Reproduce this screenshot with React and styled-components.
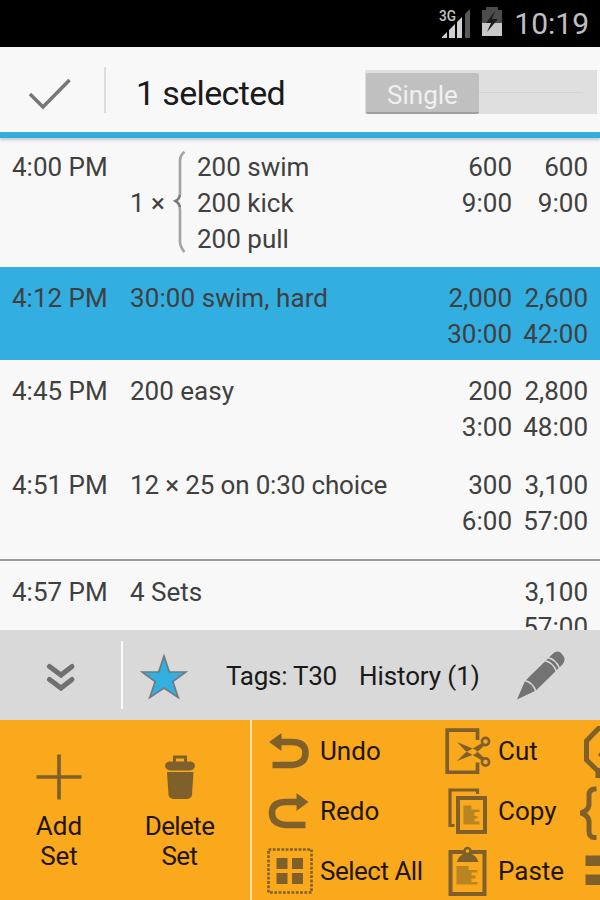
import React from "react";
import styled, { createGlobalStyle } from "styled-components";

const sets = [
  {
    time: "4:00 PM",
    repeat: "1 ×",
    lines: ["200 swim", "200 kick", "200 pull"],
    distance: ["600", "9:00"],
    total: ["600", "9:00"],
  },
  {
    time: "4:12 PM",
    lines: ["30:00 swim, hard"],
    distance: ["2,000", "30:00"],
    total: ["2,600", "42:00"],
    tracking: "0.1px",
    selected: true,
  },
  {
    time: "4:45 PM",
    lines: ["200 easy"],
    distance: ["200", "3:00"],
    total: ["2,800", "48:00"],
  },
  {
    time: "4:51 PM",
    lines: ["12 × 25 on 0:30 choice"],
    distance: ["300", "6:00"],
    total: ["3,100", "57:00"],
    tracking: "-0.15px",
  },
];

const summary = {
  time: "4:57 PM",
  lines: ["4 Sets"],
  distance: [],
  total: ["3,100", "57:00"],
};

const StatusIcons = () => (
  <svg width="90" height="47" viewBox="0 0 90 47">
    <text x="20" y="21" fontSize="15.5" fontWeight="500" fill="#c4c4c4" textLength="17" lengthAdjust="spacingAndGlyphs">
      3G
    </text>
    <path d="M23 38v-1l5-5v6zM30 38v-8l6-6v14zM38 38V22l5-5v21z" fill="#d0d0d0" />
    <path d="M46 38V14l5-5v29z" fill="#585858" />
    <path d="M63 10h4V7h12v3h4v13H63z" fill="#4c4c4c" />
    <path d="M63 23h20v13H63z" fill="#c8c8c8" />
    <path d="M76 11l-9 12h5l-4 9 11-13h-6z" fill="#1c1c1c" />
  </svg>
);

const CheckIcon = () => (
  <svg width="104" height="85" viewBox="0 0 104 85">
    <path d="M30 47l13 13L69.5 33" fill="none" stroke="#777" strokeWidth="3.6" />
  </svg>
);

const BraceIcon = () => (
  <svg width="14" height="104" viewBox="0 0 14 104">
    <path
      d="M12.5 1Q8 4 8 10V42Q8 48 3.5 50Q8 53 8 59V90Q8 96 12.5 101"
      fill="none"
      stroke="#a5a5a5"
      strokeWidth="2.7"
    />
    <path d="M8 44Q7.5 48 3.5 50Q7.5 52 8 56" fill="none" stroke="#777" strokeWidth="2" />
  </svg>
);

const ChevronsIcon = () => (
  <svg width="121" height="90" viewBox="0 0 121 90">
    <path d="M49.5 36.5l11.5 8.5L72 36.5M49.5 49.5l11.5 8.5L72 49.5" fill="none" stroke="#707070" strokeWidth="5" strokeLinecap="round" />
  </svg>
);

const StarIcon = () => (
  <svg width="48" height="46" viewBox="0 0 48 46">
    <path
      d="M24 2l5.3 16H46L32.8 27.5 38.2 43.5 24 34 9.8 43.5 15.2 27.5 2 18H18.7z"
      fill="#33b0e0"
      stroke="#707880"
      strokeWidth="1.7"
    />
  </svg>
);

const PencilIcon = () => (
  <svg width="50" height="50" viewBox="0 0 50 50">
    <path d="M1 49.5L9 31 36 4.5Q40.5-.5 45 3L48 7Q49.5 11 46.5 14.5L20 40.5z" fill="#737373" />
    <path d="M8.5 30.5Q16.5 32 20 41.5M28 10.5Q37 12 40.5 21.5M31 7.5Q40 9 43.5 18.5" fill="none" stroke="#d9d9d9" strokeWidth="1.7" />
  </svg>
);

const PlusIcon = () => (
  <svg width="46" height="46" viewBox="0 0 46 46">
    <path d="M23 .5v45M.5 23h45" stroke="#80602a" strokeWidth="3.7" />
  </svg>
);

const TrashIcon = () => (
  <svg width="32" height="46" viewBox="0 0 32 46">
    <path d="M10.5 9V3h11v6" fill="none" stroke="#80602a" strokeWidth="3" />
    <path d="M5 7.5h22q4 1 4 4.5-1 4-5 4.5H6q-4-.5-5-4.5 0-3.5 4-4.5z" fill="#80602a" />
    <path d="M3 18h26.5L28 41q-.5 3.5-5 4H9.5q-4.5-.5-5-4z" fill="#80602a" />
  </svg>
);

const UndoIcon = () => (
  <svg width="46" height="46" viewBox="0 0 46 46">
    <path d="M14 14H25Q38.5 14 38.5 25T25 37H5.5" fill="none" stroke="#80602a" strokeWidth="6.5" />
    <path d="M2 14L14.5 5v18z" fill="#80602a" />
  </svg>
);

const RedoIcon = () => (
  <svg width="46" height="46" viewBox="0 0 46 46">
    <path d="M30 14H19Q5 14 5 25T19 37H38.5" fill="none" stroke="#80602a" strokeWidth="6.5" />
    <path d="M41.5 14L29.5 5v18z" fill="#80602a" />
  </svg>
);

const SelectAllIcon = () => (
  <svg width="46" height="46" viewBox="0 0 46 46">
    <rect x="1.5" y="1.5" width="43" height="43" fill="none" stroke="#80602a" strokeWidth="2.6" strokeDasharray="2.8 1.5" />
    <path d="M9.5 10h11v11h-11zM25 10h11v11H25zM9.5 25h11v11h-11zM25 25h11v11H25z" fill="#80602a" />
  </svg>
);

const CutIcon = () => (
  <svg width="46" height="46" viewBox="0 0 46 46">
    <path d="M32.5 12V2.2H2.2V44.3H32.5V34.5" fill="none" stroke="#80602a" strokeWidth="3.7" />
    <path d="M12 14L30 21.5 39.5 30 37 32.5 20 22.5zM12 33L30 26 39.5 17.5 37 15 20 25z" fill="#80602a" />
    <circle cx="40.5" cy="13.5" r="3.6" fill="none" stroke="#80602a" strokeWidth="2.6" />
    <circle cx="40.5" cy="34" r="3.6" fill="none" stroke="#80602a" strokeWidth="2.6" />
  </svg>
);

const CopyIcon = () => (
  <svg width="46" height="46" viewBox="0 0 46 46">
    <path d="M32.5 6V2H5V37.500H9.500" fill="none" stroke="#80602a" strokeWidth="3.200" />
    <rect x="13" y="10" width="27" height="34" fill="none" stroke="#80602a" strokeWidth="4" />
    <path d="M18.500 17.500h8v4h8v2.500h-5v4h3v2.500h-3v3h5v3h-16z" fill="#b98522" />
  </svg>
);

const PasteIcon = () => (
  <svg width="46" height="50" viewBox="0 0 46 50">
    <rect x="5.500" y="6" width="34" height="42" fill="none" stroke="#80602a" strokeWidth="4" />
    <path d="M12 16q1-6 8-9h5q7 3 8.500 9z" fill="#80602a" />
    <circle cx="22.500" cy="5" r="3" fill="#f9a91b" stroke="#80602a" strokeWidth="2.500" />
    <path d="M11.500 20h12v4h9v2.500h-6v3h4v3h-4v3.500h6v2.500h-21z" fill="#b98522" />
  </svg>
);

const OverflowIcons = () => (
  <svg width="20" height="180" viewBox="-3 0 20 180">
    <path d="M19 8.500H15.500L3.500 21V40L14.500 50.500H20" fill="none" stroke="#80602a" strokeWidth="5" />
    <path d="M18 31l-3 4 3 3zM12.500 51h5v7h-5z" fill="#80602a" />
    <path d="M13.500 69H11Q6 70 6 75V85Q5 91-2 93Q5 95 6 101V111Q6 117 11 117.500H13.500" fill="none" stroke="#80602a" strokeWidth="5" />
    <path d="M2.500 135.500H18v10.500H2.500zM2.500 154.500H18v10.500H2.500z" fill="#80602a" />
  </svg>
);

const SetItem = ({ time, repeat, lines, distance, total, selected, tracking }) => (
  <SetRow $selected={selected}>
    <Time>{time}</Time>
    <Description $tracking={tracking}>
      {repeat && (
        <Repeat>
          <span>{repeat}</span>
          <BraceIcon />
        </Repeat>
      )}
      <div>
        {lines.map((line) => (
          <Line key={line}>{line}</Line>
        ))}
      </div>
    </Description>
    <Figures $width="75px">
      {distance.map((value) => (
        <Line key={value}>{value}</Line>
      ))}
    </Figures>
    <Figures $width="76px">
      {total.map((value) => (
        <Line key={value}>{value}</Line>
      ))}
    </Figures>
  </SetRow>
);

const App = () => {
  return (
    <Screen>
      <GlobalStyle />
      <StatusBar>
        <StatusIcons />
        <Clock>10:19</Clock>
      </StatusBar>

      <ActionBar>
        <CheckIcon />
        <Divider $height="46px" $color="#dcdcdc" />
        <Title>1 selected</Title>
        <Switch>
          <Thumb>Single</Thumb>
          <Groove />
        </Switch>
      </ActionBar>

      <SetList>
        {sets.map((set) => (
          <SetItem key={set.time} {...set} />
        ))}
        <Total>
          <SetItem {...summary} />
        </Total>
      </SetList>

      <TagBar>
        <ChevronsIcon />
        <Divider $height="68px" $color="#fafafa" />
        <StarSlot>
          <StarIcon />
        </StarSlot>
        <Tags>Tags: T30</Tags>
        <History>History (1)</History>
        <PencilIcon />
      </TagBar>

      <Commands>
        <BigButton $width="118px">
          <PlusIcon />
          <BigLabel>
            Add
            <br />
            Set
          </BigLabel>
        </BigButton>
        <BigButton $width="123px">
          <TrashIcon />
          <BigLabel $tracking="-0.6px">
            Delete
            <br />
            Set
          </BigLabel>
        </BigButton>
        <CommandGrid>
          <Command>
            <UndoIcon />
            Undo
          </Command>
          <Command>
            <RedoIcon />
            Redo
          </Command>
          <Command $tracking="-0.5px">
            <SelectAllIcon />
            Select All
          </Command>
          <Command>
            <CutIcon />
            Cut
          </Command>
          <Command>
            <CopyIcon />
            Copy
          </Command>
          <Command>
            <PasteIcon />
            Paste
          </Command>
        </CommandGrid>
        <OverflowIcons />
      </Commands>
    </Screen>
  );
};

export default App;

const GlobalStyle = createGlobalStyle`
  body {
    margin: 0;
    font-family: Roboto, "Liberation Sans", sans-serif;
  }
  svg {
    display: block;
    flex-shrink: 0;
  }
`;

const Screen = styled.div`
  display: flex;
  flex-direction: column;
  width: 600px;
  height: 900px;
  overflow: hidden;
  background: #f8f8f8;
`;

const StatusBar = styled.div`
  display: flex;
  align-items: center;
  justify-content: flex-end;
  height: 47px;
  flex-shrink: 0;
  padding-right: 11px;
  background: #000;
`;

const Clock = styled.span`
  margin-left: 5px;
  font-size: 30px;
  line-height: 47px;
  color: #c0c0c0;
`;

const ActionBar = styled.header`
  display: flex;
  align-items: center;
  height: 85px;
  flex-shrink: 0;
  border-bottom: 6px solid #33aedc;
  box-shadow: 0 2px 3px rgba(0, 0, 0, 0.2);
  z-index: 1;
`;

const Divider = styled.div`
  width: 2px;
  height: ${(props) => props.$height};
  flex-shrink: 0;
  background: ${(props) => props.$color};
`;

const Title = styled.h1`
  flex: 1;
  margin: 7px 0 0 30px;
  font-size: 34px;
  font-weight: 400;
  line-height: 40px;
  letter-spacing: -0.65px;
  color: #1a1a1a;
`;

const Switch = styled.div`
  display: flex;
  align-items: center;
  width: 232px;
  height: 44px;
  margin: 5px 3px 0 0;
  background: #dfdfdf;
`;

const Thumb = styled.div`
  width: 113px;
  height: 39px;
  margin: 2px 0 0 1px;
  border-bottom: 2px solid #9f9f9f;
  border-radius: 2px;
  background: #c0c0c0;
  color: #f0f0f0;
  font-size: 26px;
  line-height: 45px;
  text-align: center;
`;

const Groove = styled.div`
  width: 104px;
  height: 1px;
  background: #d2d2d2;
`;

const SetList = styled.main`
  flex: 1;
  min-height: 0;
  overflow: hidden;
`;

const SetRow = styled.div`
  display: flex;
  padding: 12px 12px 10px;
  background: ${(props) => (props.$selected ? "#32aee0" : "transparent")};
  color: #404040;
  font-size: 26px;

  &:first-child {
    padding-top: 10px;
    padding-bottom: 11.5px;
  }
`;

const Line = styled.div`
  height: 35.8px;
  line-height: 38px;
  white-space: nowrap;
`;

const Time = styled(Line)`
  width: 118px;
`;

const Description = styled.div`
  display: flex;
  flex: 1;
  letter-spacing: ${(props) => props.$tracking || "normal"};
`;

const Repeat = styled.div`
  display: flex;
  align-items: center;
  justify-content: space-between;
  width: 56px;
  margin-right: 11px;
  padding-top: 2px;
`;

const Figures = styled.div`
  width: ${(props) => props.$width};
  text-align: right;
`;

const Total = styled.div`
  margin-top: 11px;
  border-top: 2px solid #9b9b9b;

  ${SetRow} {
    padding-top: 12px;
  }
`;

const TagBar = styled.div`
  display: flex;
  align-items: center;
  height: 90px;
  flex-shrink: 0;
  background: #d9d9d9;
  color: #1a1a1a;
  font-size: 26px;
`;

const StarSlot = styled.div`
  margin: 4px 38px 0 17px;
`;

const Tags = styled.span`
  width: 133px;
  line-height: 32px;
  padding-top: 2px;
  letter-spacing: -0.25px;
  white-space: nowrap;
`;

const History = styled(Tags)`
  width: 157px;
  letter-spacing: -0.1px;
`;

const Commands = styled.footer`
  display: flex;
  height: 180px;
  flex-shrink: 0;
  overflow: hidden;
  background: #f9a91b;
  color: #1f1606;
`;

const BigButton = styled.div`
  display: flex;
  flex-direction: column;
  align-items: center;
  width: ${(props) => props.$width};
  flex-shrink: 0;
  padding-top: 34px;
`;

const BigLabel = styled.div`
  margin-top: 11px;
  font-size: 26px;
  line-height: 30px;
  letter-spacing: ${(props) => props.$tracking || "normal"};
  text-align: center;
`;

const CommandGrid = styled.div`
  display: grid;
  grid-auto-flow: column;
  grid-template-rows: repeat(3, 60px);
  grid-template-columns: 178px 135px;
  flex-shrink: 0;
  margin-left: 9px;
  padding-left: 15px;
  border-left: 2px solid #fde3ae;
`;

const Command = styled.div`
  display: flex;
  align-items: center;
  gap: 7px;
  padding-top: 1px;
  font-size: 26px;
  letter-spacing: ${(props) => props.$tracking || "normal"};
  white-space: nowrap;
`;
